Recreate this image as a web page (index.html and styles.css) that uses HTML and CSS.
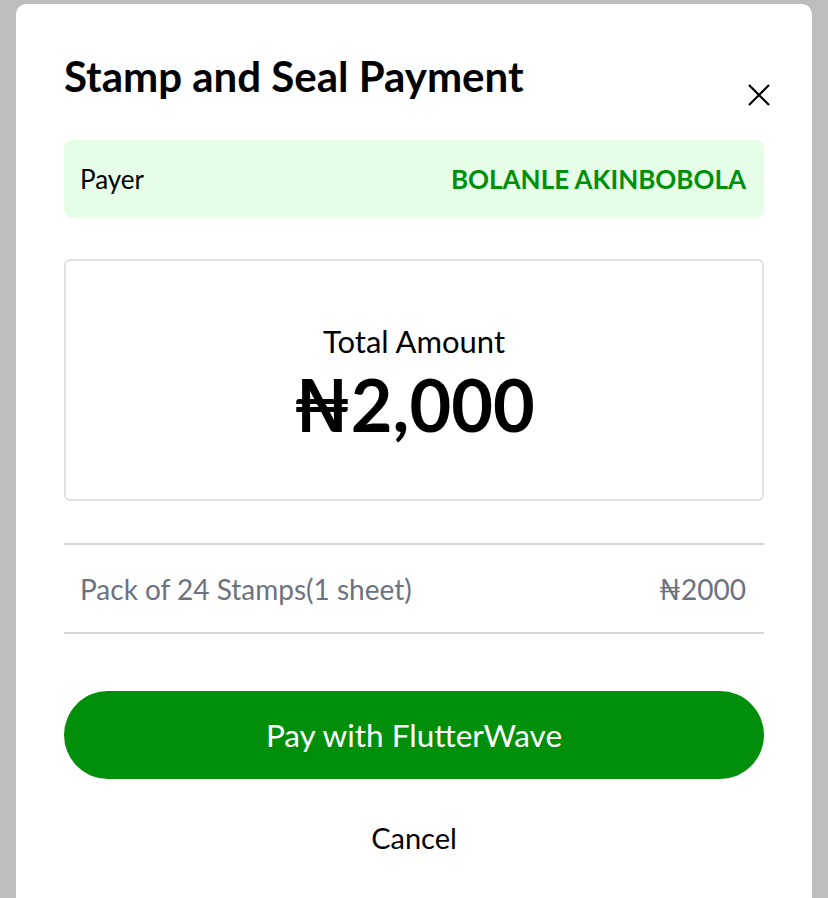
FILE: index.html
```html
<!DOCTYPE html>
<html>
<head>
<meta charset="utf-8">
<link rel="stylesheet" href="styles.css">
</head>
<body>
<div class="modal">
  <div class="header">
    <h1 class="title">Stamp and Seal Payment</h1>
    <button class="close" aria-label="Close">
      <svg width="24" height="24" viewBox="0 0 24 24"><path d="M2 2L22 22M22 2L2 22" stroke="#000" stroke-width="2.2" fill="none"/></svg>
    </button>
  </div>
  <div class="payer">
    <span class="payer-label">Payer</span>
    <span class="payer-name">BOLANLE AKINBOBOLA</span>
  </div>
  <div class="total">
    <div class="total-label">Total Amount</div>
    <div class="total-value">₦2,000</div>
  </div>
  <div class="item">
    <span>Pack of 24 Stamps(1 sheet)</span>
    <span>₦2000</span>
  </div>
  <button class="pay">Pay with FlutterWave</button>
  <button class="cancel">Cancel</button>
</div>
</body>
</html>
```
FILE: styles.css
```css
html, body {
  margin: 0;
  padding: 0;
  height: 100%;
  overflow: hidden;
}
body {
  background: #bdbdbd;
  font-family: Lato, "Noto Sans", sans-serif;
  color: #000;
}
.modal {
  margin: 4px 16px 0 16px;
  background: #fff;
  border-radius: 10px 10px 0 0;
  padding: 44px 48px 40px 48px;
  height: 1000px;
  box-sizing: border-box;
}
.header {
  display: flex;
  justify-content: space-between;
  align-items: flex-start;
}
.title {
  margin: 0;
  font-size: 42px;
  line-height: 56px;
  font-weight: 700;
  letter-spacing: 0;
}
.close {
  border: 0;
  background: none;
  padding: 0;
  margin: 35px -7px 0 0;
  width: 24px;
  height: 24px;
}
.payer {
  margin-top: 33px;
  height: 78px;
  background: #e6fde7;
  border-radius: 8px;
  display: flex;
  justify-content: space-between;
  align-items: center;
  padding: 0 18px 0 16px;
  font-size: 26px;
}
.payer-name {
  color: #008f0a;
  font-weight: 700;
}
.total {
  margin-top: 41px;
  height: 242px;
  padding-top: 12px;
  border: 2px solid #e2e2e2;
  border-radius: 6px;
  box-sizing: border-box;
  display: flex;
  flex-direction: column;
  align-items: center;
  justify-content: center;
}
.total-label {
  font-size: 31px;
  line-height: 36px;
  margin-top: -6px;
}
.total-value {
  font-size: 72px;
  font-weight: 700;
  line-height: 80px;
  margin-top: 5px;
}
.item {
  margin-top: 42px;
  height: 91px;
  border-top: 2px solid #d6d6d8;
  border-bottom: 2px solid #d6d6d8;
  box-sizing: border-box;
  display: flex;
  justify-content: space-between;
  align-items: center;
  padding: 0 18px 0 16px;
  color: #6b7280;
  font-size: 28px;
}
.pay {
  display: block;
  width: 100%;
  margin-top: 57px;
  height: 88px;
  border: 0;
  border-radius: 44px;
  background: #008f0a;
  color: #fff;
  font-family: inherit;
  font-size: 31.5px;
}
.cancel {
  display: block;
  margin: 31px auto 0 auto;
  border: 0;
  background: none;
  font-family: inherit;
  font-size: 29px;
  color: #000;
  padding: 10px 20px;
}
```
